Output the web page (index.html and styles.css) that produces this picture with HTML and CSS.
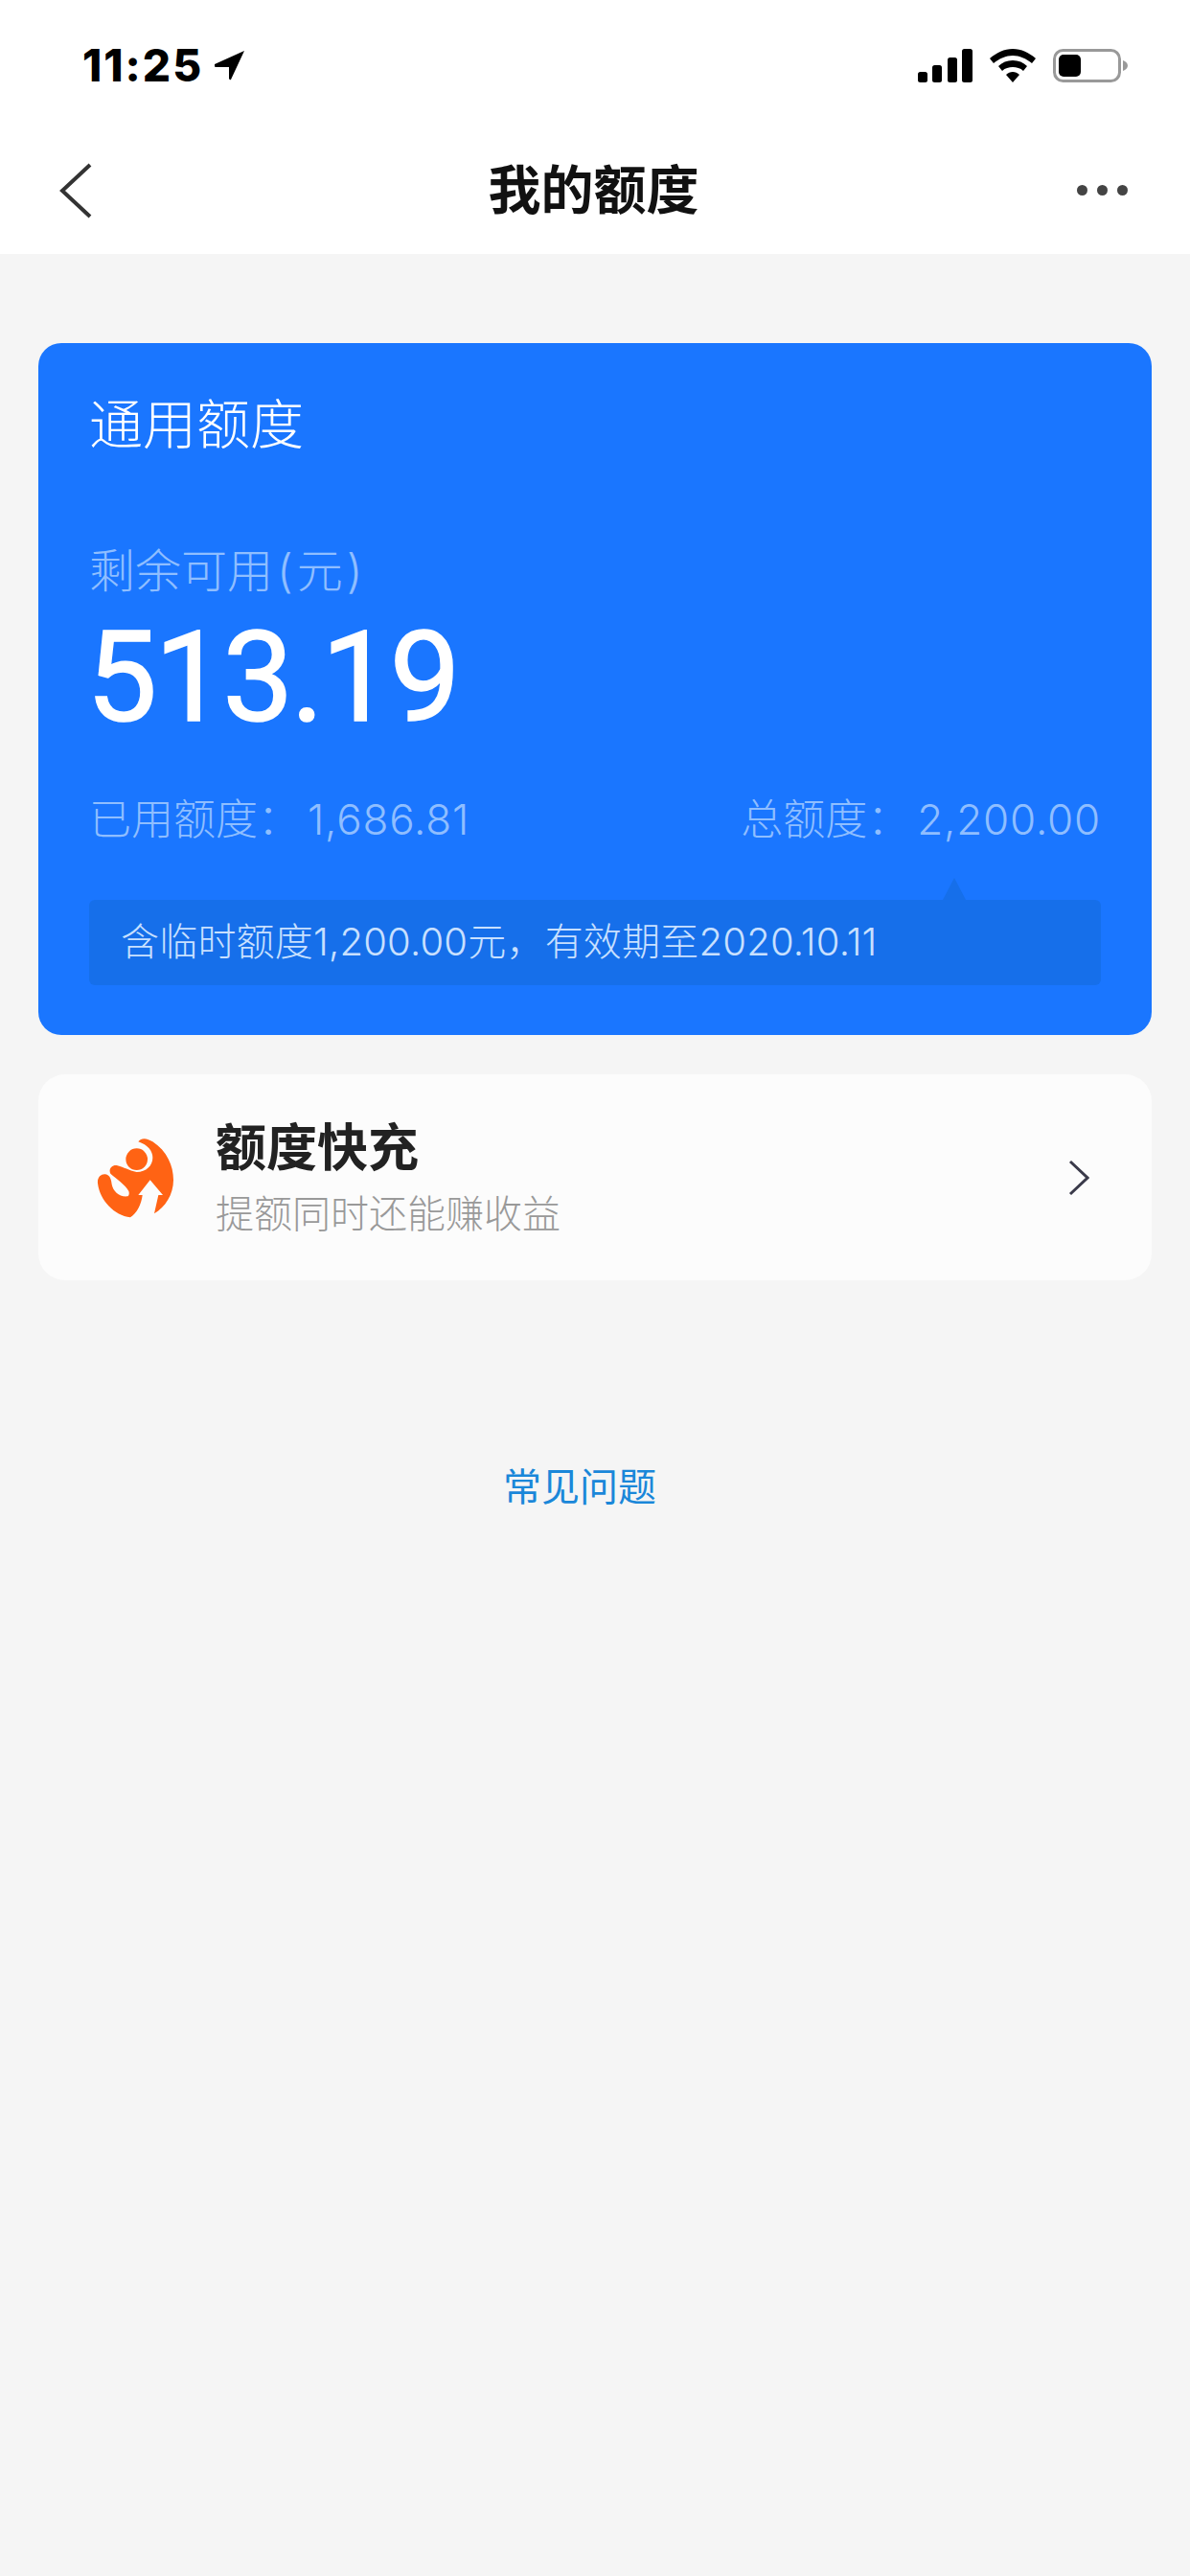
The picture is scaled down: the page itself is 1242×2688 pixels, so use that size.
FILE: index.html
```html
<!DOCTYPE html>
<html lang="zh-CN">
<head>
    <meta charset="UTF-8">
    <meta name="viewport" content="width=device-width, initial-scale=1.0">
    <title>我的额度</title>
    <link rel="stylesheet" href="styles.css">
</head>
<body>
    <!-- 状态栏 -->
    <div class="status-bar">
        <div class="status-left">
            <span class="status-time">11:25</span>
            <svg class="status-arrow" width="32" height="32" viewBox="0 0 32 32">
                <path d="M31 1 L0 15 Q-1 17 1 18 L15 18 L15 30 Q16 32 17 31 Z" fill="#000"/>
            </svg>
        </div>
        <div class="status-right">
            <svg width="57" height="35" viewBox="0 0 57 35">
                <rect x="0" y="24" width="10" height="11" rx="2.5" fill="#000"/>
                <rect x="15" y="17" width="10" height="18" rx="2.5" fill="#000"/>
                <rect x="31" y="9" width="10" height="26" rx="2.5" fill="#000"/>
                <rect x="46" y="0" width="11" height="35" rx="2.5" fill="#000"/>
            </svg>
            <svg width="48" height="35" viewBox="0 0 48 35">
                <path d="M24 0 C33 0 41 4 48 10 L44 15 C38 10 31 7 24 7 C17 7 10 10 4 15 L0 10 C7 4 15 0 24 0 Z" fill="#000"/>
                <path d="M24 12 C30 12 35 14 39 18 L35 23 C32 20 28 19 24 19 C20 19 16 20 13 23 L9 18 C13 14 18 12 24 12 Z" fill="#000"/>
                <path d="M24 24 C26.500 24 29 25 31 27 L24 35 L17 27 C19 25 21.500 24 24 24 Z" fill="#000"/>
            </svg>
            <svg width="78" height="35" viewBox="0 0 78 35">
                <rect x="1.500" y="1.500" width="68" height="32" rx="9" fill="none" stroke="#999" stroke-width="3"/>
                <rect x="6" y="6" width="23" height="23" rx="5" fill="#000"/>
                <path d="M73 12 C76 13 78 15 78 17.500 C78 20 76 22 73 23 Z" fill="#999"/>
            </svg>
        </div>
    </div>

    <!-- 导航栏 -->
    <div class="nav-bar">
        <svg class="nav-back" width="34" height="58" viewBox="0 0 34 58">
            <path d="M32 2 L3 29 L32 56" fill="none" stroke="#333" stroke-width="4"/>
        </svg>
        <h1 class="nav-title">我的额度</h1>
        <div class="nav-more">
            <span class="dot"></span>
            <span class="dot"></span>
            <span class="dot"></span>
        </div>
    </div>

    <div class="content">
        <!-- 通用额度卡片 -->
        <div class="quota-card">
            <div class="quota-title">通用额度</div>
            <div class="quota-label">剩余可用<span class="unit">(元)</span></div>
            <div class="quota-amount">513.19</div>
            <div class="quota-row">
                <span>已用额度<span class="colon">：</span><span class="num">1,686.81</span></span>
                <span>总额度<span class="colon">：</span><span class="num">2,200.00</span></span>
            </div>
            <div class="quota-tip">含临时额度1,200.00元，有效期至2020.10.11</div>
        </div>

        <!-- 额度快充 -->
        <div class="charge-card">
            <svg class="charge-icon" width="81" height="84" viewBox="65 82 243 252">
                <path d="M195 95 C205 80 225 85 240 95 C285 125 305 170 305 215 C305 260 280 300 245 320 L258 262 L272 262 L232 215 L195 262 L208 262 C205 290 190 320 170 332 C120 325 75 280 68 225 C66 205 80 195 92 197 C108 200 110 215 112 228 C116 250 135 268 160 266 C165 266 168 258 165 250 C155 230 125 210 108 195 C100 180 115 165 130 170 C150 175 165 185 190 190 C220 190 240 170 240 145 C240 125 225 105 195 95 Z" fill="#ff6314"/>
                <circle cx="190" cy="150" r="34" fill="#ff6314"/>
            </svg>
            <div class="charge-text">
                <div class="charge-title">额度快充</div>
                <div class="charge-sub">提额同时还能赚收益</div>
            </div>
            <svg class="charge-arrow" width="22" height="38" viewBox="0 0 22 38">
                <path d="M2 2 L20 19 L2 36" fill="none" stroke="#3a3a4a" stroke-width="3"/>
            </svg>
        </div>

        <div class="faq-link">常见问题</div>
    </div>
</body>
</html>
```

FILE: styles.css
```css
body {
    font-family: "Noto Sans CJK SC", "Noto Sans", sans-serif;
    background: #f5f5f5;
    margin: 0;
    min-height: 2688px;
}

.status-bar {
    display: flex;
    justify-content: space-between;
    align-items: center;
    box-sizing: border-box;
    height: 132px;
    padding: 4px 65px 0 86px;
    background: #fff;
}

.status-left {
    display: flex;
    align-items: center;
    gap: 12px;
}

.status-time {
    font-family: "Inter", "Liberation Sans", sans-serif;
    font-size: 46px;
    font-weight: 800;
    line-height: 50px;
    letter-spacing: 2px;
    color: #000;
}

.status-right {
    display: flex;
    align-items: center;
    gap: 18px;
}

.nav-bar {
    display: grid;
    grid-template-columns: 1fr auto 1fr;
    align-items: center;
    box-sizing: border-box;
    height: 133px;
    padding: 0 65px 0 62px;
    background: #fff;
}

.nav-title {
    margin: 0 0 9px;
    font-size: 55px;
    font-weight: 700;
    line-height: 70px;
    color: #111;
}

.nav-more {
    display: flex;
    justify-content: flex-end;
    gap: 10px;
}

.dot {
    width: 11px;
    height: 11px;
    border-radius: 50%;
    background: #444;
}

.content {
    padding: 93px 40px 0;
}

.quota-card {
    height: 722px;
    box-sizing: border-box;
    padding: 47px 53px 0;
    font-family: "Inter", "Noto Sans CJK SC", sans-serif;
    background: #1a76ff;
    border-radius: 24px;
}

.quota-title {
    font-size: 56px;
    font-weight: 300;
    line-height: 76px;
    color: #fff;
}

.quota-label {
    margin-top: 85px;
    font-size: 48px;
    font-weight: 300;
    line-height: 60px;
    color: #8fbeff;
}

.unit {
    margin-left: 4px;
    letter-spacing: 4px;
}

.quota-amount {
    margin: 16px 0 0 -3px;
    font-family: "Roboto", sans-serif;
    font-size: 132px;
    font-weight: 400;
    line-height: 130px;
    letter-spacing: -3px;
    color: #fff;
    -webkit-text-stroke: 1.5px #fff;
}

.quota-row {
    display: flex;
    justify-content: space-between;
    margin-top: 50px;
    font-size: 44px;
    font-weight: 300;
    line-height: 60px;
    color: #8fbeff;
}

.colon {
    margin-right: 8px;
    font-family: "Noto Sans CJK TC", sans-serif;
}

.num {
    letter-spacing: 0.8px;
}

.quota-tip {
    position: relative;
    margin-top: 54px;
    padding: 0 0 2px 33px;
    font-size: 40px;
    font-weight: 300;
    line-height: 87px;
    letter-spacing: 0.2px;
    color: #c8e0ff;
    background: #166fea;
    border-radius: 6px;
}

/* 提示框上方的小三角 */
.quota-tip::before {
    content: "";
    position: absolute;
    left: 891px;
    top: -23px;
    border-left: 12px solid transparent;
    border-right: 12px solid transparent;
    border-bottom: 23px solid #166fea;
}

.charge-card {
    display: flex;
    align-items: center;
    height: 215px;
    margin-top: 41px;
    padding: 0 65px 0 61px;
    background: #fcfcfc;
    border-radius: 28px;
}

.charge-text {
    margin-left: 43px;
    padding-bottom: 6px;
}

.charge-title {
    margin-bottom: 7px;
    font-size: 53px;
    font-weight: 700;
    line-height: 70px;
    color: #222;
}

.charge-sub {
    font-size: 40px;
    font-weight: 300;
    line-height: 56px;
    color: #999;
}

.charge-arrow {
    margin-left: auto;
}

.faq-link {
    margin-top: 183px;
    padding-right: 32px;
    font-size: 40px;
    line-height: 60px;
    text-align: center;
    color: #1a87d9;
}
```
